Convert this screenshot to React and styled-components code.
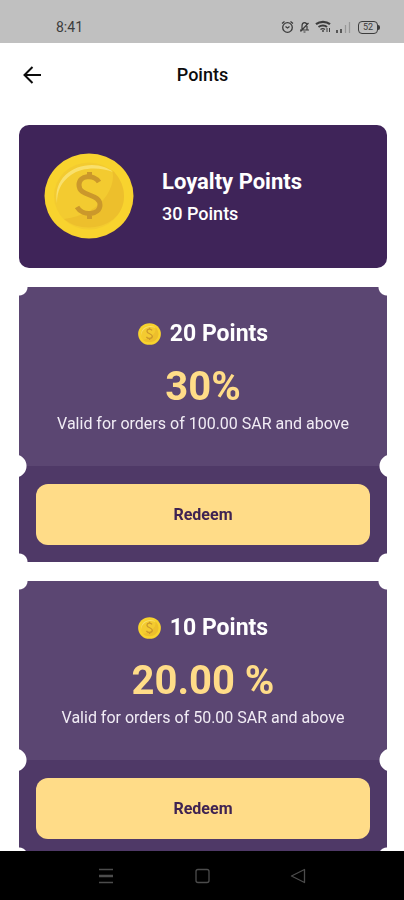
import React from 'react';
import styled, {createGlobalStyle} from "styled-components";


const GlobalStyle = createGlobalStyle`
  * {
    box-sizing: border-box;
  }

  body {
    margin: 0;
    background: #ffffff;
    font-family: Roboto, "Liberation Sans", sans-serif;
  }
`;

const Screen = styled.div`
  display: flex;
  flex-direction: column;
  height: 100vh;
  background: #ffffff;
`;

const StatusBar = styled.div`
  display: flex;
  flex: none;
  align-items: flex-end;
  justify-content: space-between;
  height: 43px;
  padding: 0 24px 8px 56px;
  background: #c0c0c0;
  color: #3c3c3c;
`;

const Clock = styled.span`
  font-size: 14px;
  line-height: 16px;
`;

const StatusIcons = styled.div`
  display: flex;
  align-items: center;
  gap: 5px;
  height: 16px;

  svg {
    display: block;
  }
`;

const Header = styled.header`
  display: grid;
  flex: none;
  grid-template-columns: 24px 1fr 24px;
  align-items: center;
  height: 64px;
  padding: 0 19px 0 20px;
`;

const BackButton = styled.button`
  width: 24px;
  height: 24px;
  padding: 0;
  border: 0;
  background: none;
  color: #0c0c0c;
  cursor: pointer;

  svg {
    display: block;
  }
`;

const Title = styled.h1`
  margin: 0;
  text-align: center;
  font-size: 18px;
  font-weight: 500;
  line-height: 24px;
  color: #0c0c0c;
`;

const Content = styled.main`
  display: flex;
  flex: 1;
  flex-direction: column;
  gap: 19px;
  min-height: 0;
  padding: 18px 17px 18px 19px;
  overflow-y: auto;
  scrollbar-width: none;
`;

const BalanceCard = styled.section`
  display: flex;
  flex: none;
  align-items: center;
  gap: 28px;
  padding: 28px 25px 29px;
  border-radius: 10px;
  background: #3f2459;
  color: #ffffff;
`;

const BalanceText = styled.div`
  padding-top: 4px;
`;

const BalanceTitle = styled.h2`
  margin: 0;
  font-size: 22px;
  font-weight: 700;
  line-height: 32px;
`;

const BalanceValue = styled.p`
  margin: 0;
  font-size: 18px;
  font-weight: 500;
  line-height: 32px;
`;

const TicketCard = styled.article`
  flex: none;
`;

const TicketInfo = styled.div`
  display: flex;
  flex-direction: column;
  align-items: center;
  padding: 32px 16px;
  background: #5b4672;
  color: #ffffff;
  mask: radial-gradient(circle at 0 0, transparent 8px, #000 9px),
    radial-gradient(circle at 100% 0, transparent 8px, #000 9px),
    radial-gradient(circle at -4px 100%, transparent 11px, #000 12px),
    radial-gradient(circle at calc(100% + 4px) 100%, transparent 11px, #000 12px);
  mask-composite: intersect;
`;

const TicketAction = styled.div`
  padding: 18px 17px 17px;
  background: #4f3967;
  mask: radial-gradient(circle at -4px 0, transparent 11px, #000 12px),
    radial-gradient(circle at calc(100% + 4px) 0, transparent 11px, #000 12px),
    radial-gradient(circle at 0 100%, transparent 8px, #000 9px),
    radial-gradient(circle at 100% 100%, transparent 8px, #000 9px);
  mask-composite: intersect;
`;

const TicketCost = styled.h3`
  display: flex;
  align-items: center;
  gap: 9px;
  margin: 0;
  font-size: 23px;
  font-weight: 700;
  line-height: 30px;

  svg {
    display: block;
  }
`;

const TicketDiscount = styled.p`
  margin: 14px 0 4px;
  font-size: 40px;
  font-weight: 700;
  line-height: 48px;
  color: #ffdc88;
`;

const TicketTerms = styled.p`
  margin: 0 0 2px;
  text-align: center;
  font-size: 16px;
  line-height: 17px;
  color: #f1ecf5;
`;

const RedeemButton = styled.button`
  display: block;
  width: 100%;
  height: 61px;
  border: 0;
  border-radius: 12px;
  background: #ffdc88;
  color: #3f2352;
  font-family: inherit;
  font-size: 16px;
  font-weight: 700;
  cursor: pointer;
`;

const NavBar = styled.nav`
  display: flex;
  flex: none;
  align-items: center;
  justify-content: center;
  gap: 72px;
  height: 49px;
  background: #000000;
`;

const NavButton = styled.button`
  width: 24px;
  height: 24px;
  padding: 0;
  border: 0;
  background: none;
  color: #4c4c4c;
  cursor: pointer;

  svg {
    display: block;
  }
`;

const Coin = ({width, height}) => (
    <svg width={width} height={height} viewBox="0 0 90 86" aria-hidden="true">
        <ellipse cx="45" cy="43" rx="44.5" ry="42.5" fill="#f8d32e"/>
        <ellipse cx="45" cy="43" rx="35" ry="33.5" fill="#f3cb30"/>
        <path d="M68 17 C73 31 60 61 20 66 C40 83 80 74 80 43 C80 32 74 22 68 17Z" fill="#edbf2c"/>
        <path
            d="M13 50 C9 26 28 12 48 12 C57 12 64 15 69 19 C56 14 38 14 27 22 C17 29 13 38 13 50Z"
            fill="#f9e06c"
        />
        <path
            d="M55 29 C50 21 35 22 35 32 C35 44 56 40 56 52 C56 62 39 64 33 54 M45.5 19 V26 M45.5 59 V66"
            fill="none"
            stroke="#cb982b"
            strokeWidth="5"
        />
    </svg>
);

const AlarmIcon = () => (
    <svg width="13" height="14" viewBox="0 0 13 14" fill="none" stroke="currentColor" strokeWidth="1.3">
        <circle cx="6.5" cy="7.5" r="4.8"/>
        <path d="M1 3.5 L3.5 1.5 M12 3.5 L9.5 1.5 M4.5 6.5 L6.5 8 L8.5 6.5"/>
    </svg>
);

const MutedIcon = () => (
    <svg width="11" height="14" viewBox="0 0 11 14" fill="none" stroke="currentColor" strokeWidth="1.2">
        <path d="M3 9.5 V6 C3 1.5 8 1.5 8 6 V9.5 M1 10 H10 M4.5 12 H6.5 M1.5 11.5 L9.5 3"/>
    </svg>
);

const WifiIcon = () => (
    <svg width="16" height="14" viewBox="0 0 16 14" fill="none" stroke="currentColor">
        <path d="M1 4.2 C5 1 11 1 15 4.2" strokeWidth="2.2"/>
        <path d="M3.5 7 C6 5 10 5 12 7" strokeWidth="1.8"/>
        <path d="M5.5 9.5 C7 8.3 8.5 8.3 10 9.5 M8 10 V12" strokeWidth="1.4"/>
        <path d="M12 12 V8 M14.5 8 V12" strokeWidth="1"/>
    </svg>
);

const SignalIcon = () => (
    <svg width="15" height="14" viewBox="0 0 15 14" fill="none" stroke="currentColor" strokeWidth="1.6">
        <path d="M1 13 V10 M5 13 V9"/>
        <path d="M9.5 13 V5 M13.5 13 V2" strokeWidth="1.2" opacity="0.3"/>
    </svg>
);

const Battery = styled.span`
  display: flex;
  align-items: center;
  margin-left: 2px;
`;

const BatteryLevel = styled.span`
  width: 20px;
  border: 1px solid currentColor;
  border-radius: 4px;
  text-align: center;
  font-size: 9px;
  line-height: 11px;
`;

const BatteryTip = styled.span`
  width: 2px;
  height: 5px;
  border-radius: 0 2px 2px 0;
  background: currentColor;
`;

const OFFERS = [
    {points: 20, discount: "30%", minimum: "100.00"},
    {points: 10, discount: "20.00 %", minimum: "50.00"},
];

const Ticket = ({points, discount, minimum}) => (
    <TicketCard>
        <TicketInfo>
            <TicketCost>
                <Coin width={23} height={22}/>
                {`${points} Points`}
            </TicketCost>
            <TicketDiscount>{discount}</TicketDiscount>
            <TicketTerms>{`Valid for orders of ${minimum} SAR and above`}</TicketTerms>
        </TicketInfo>
        <TicketAction>
            <RedeemButton type="button">Redeem</RedeemButton>
        </TicketAction>
    </TicketCard>
);

const App = () => {
    return (
        <Screen>
            <GlobalStyle/>
            <StatusBar>
                <Clock>8:41</Clock>
                <StatusIcons>
                    <AlarmIcon/>
                    <MutedIcon/>
                    <WifiIcon/>
                    <SignalIcon/>
                    <Battery>
                        <BatteryLevel>52</BatteryLevel>
                        <BatteryTip/>
                    </Battery>
                </StatusIcons>
            </StatusBar>
            <Header>
                <BackButton type="button" aria-label="Back">
                    <svg width="24" height="24" viewBox="0 0 24 24" fill="none" stroke="currentColor" strokeWidth="2">
                        <path d="M21 12 H4.5 M12.5 4 L4.5 12 L12.5 20"/>
                    </svg>
                </BackButton>
                <Title>Points</Title>
            </Header>
            <Content>
                <BalanceCard>
                    <Coin width={90} height={86}/>
                    <BalanceText>
                        <BalanceTitle>Loyalty Points</BalanceTitle>
                        <BalanceValue>30 Points</BalanceValue>
                    </BalanceText>
                </BalanceCard>
                {OFFERS.map((offer) => (
                    <Ticket key={offer.points} {...offer}/>
                ))}
            </Content>
            <NavBar>
                <NavButton type="button" aria-label="Recent apps">
                    <svg width="24" height="24" viewBox="0 0 24 24" fill="none" stroke="currentColor" strokeWidth="1.5">
                        <path d="M5 5.5 H19 M5 18.5 H19"/>
                        <path d="M5 12 H19" strokeWidth="2.5"/>
                    </svg>
                </NavButton>
                <NavButton type="button" aria-label="Home">
                    <svg width="24" height="24" viewBox="0 0 24 24" fill="none" stroke="currentColor" strokeWidth="1.3">
                        <rect x="6" y="5.5" width="13" height="13" rx="2"/>
                    </svg>
                </NavButton>
                <NavButton type="button" aria-label="Go back">
                    <svg width="24" height="24" viewBox="0 0 24 24" fill="none" stroke="currentColor" strokeWidth="1.3">
                        <path d="M18.5 5.5 V18.5 L5.5 12 Z" strokeLinejoin="round"/>
                    </svg>
                </NavButton>
            </NavBar>
        </Screen>
    );
};

export default App;
